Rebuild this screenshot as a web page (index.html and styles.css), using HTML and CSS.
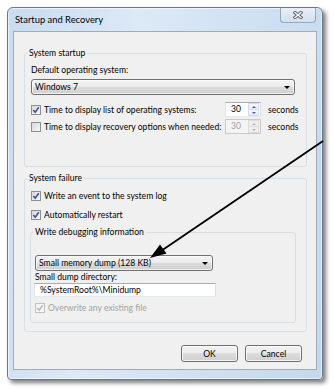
FILE: index.html
```html
<!DOCTYPE html>
<html lang="en">
<head>
    <meta charset="UTF-8">
    <title>Startup and Recovery</title>
    <link rel="stylesheet" href="styles.css">
</head>
<body>
    <div class="window">
        <div class="titlebar">
            <span class="title">Startup and Recovery</span>
            <span class="close">
                <svg width="10" height="8" viewBox="0 0 10 8">
                    <path d="M2 1.5 L8 6.5 M8 1.5 L2 6.5" stroke="#5c636c" stroke-width="3.2" stroke-linecap="square"/>
                    <path d="M2 1.5 L8 6.5 M8 1.5 L2 6.5" stroke="#fff" stroke-width="1.3" stroke-linecap="square"/>
                </svg>
            </span>
        </div>

        <div class="client">
            <fieldset class="group startup">
                <legend>System startup</legend>
                <div class="inner">
                    <div class="label">Default operating system:</div>
                    <div class="combo wide"><span>Windows 7</span><i class="caret"></i></div>
                    <div class="row first">
                        <label class="check wide-label"><span class="box"><svg width="8" height="8" viewBox="0 0 8 8"><path d="M1.3 4 L3.2 6.2 L6.8 1.2" fill="none" stroke="#3b5398" stroke-width="1.6"/></svg></span>Time to display list of operating systems:</label>
                        <span class="spin"><span class="num">30</span><span class="arrows"><b class="up"></b><b class="down"></b></span></span>
                        <span class="unit">seconds</span>
                    </div>
                    <div class="row">
                        <label class="check wide-label"><span class="box"></span>Time to display recovery options when needed:</label>
                        <span class="spin disabled"><span class="num">30</span><span class="arrows"><b class="up"></b><b class="down"></b></span></span>
                        <span class="unit">seconds</span>
                    </div>
                </div>
            </fieldset>

            <fieldset class="group failure">
                <legend>System failure</legend>
                <div class="inner">
                    <label class="check line"><span class="box"><svg width="8" height="8" viewBox="0 0 8 8"><path d="M1.3 4 L3.2 6.2 L6.8 1.2" fill="none" stroke="#3b5398" stroke-width="1.6"/></svg></span>Write an event to the system log</label>
                    <label class="check line second"><span class="box"><svg width="8" height="8" viewBox="0 0 8 8"><path d="M1.3 4 L3.2 6.2 L6.8 1.2" fill="none" stroke="#3b5398" stroke-width="1.6"/></svg></span>Automatically restart</label>

                    <fieldset class="group debug">
                        <legend>Write debugging information</legend>
                        <div class="inner">
                            <div class="combo narrow"><span>Small memory dump (128 KB)</span><i class="caret"></i></div>
                            <div class="label">Small dump directory:</div>
                            <div class="textbox">%SystemRoot%\Minidump</div>
                            <label class="check line disabled overwrite"><span class="box"><svg width="8" height="8" viewBox="0 0 8 8"><path d="M1.3 4 L3.2 6.2 L6.8 1.2" fill="none" stroke="#b4b4b4" stroke-width="1.4"/></svg></span>Overwrite any existing file</label>
                        </div>
                    </fieldset>
                </div>
            </fieldset>

            <div class="buttons">
                <button>OK</button>
                <button>Cancel</button>
            </div>
        </div>
    </div>

    <svg class="pointer" width="334" height="389" viewBox="0 0 334 389">
        <line x1="323" y1="141" x2="161" y2="251" stroke="#000" stroke-width="1.8"/>
        <polygon points="150,258 166.5,253.5 160,244.5" fill="#000"/>
    </svg>
</body>
</html>
```

FILE: styles.css
```css
body { margin: 0; padding: 7px 0 0 7px; height: 389px; box-sizing: border-box; overflow: hidden; position: relative; background: #fff; color: #000; font: 8.6px/12px Lato, "Liberation Sans", sans-serif; }

.window { width: 316px; height: 373px; box-sizing: border-box; border: 1px solid #6e7884; border-radius: 6px 6px 4px 4px; padding: 0 5px 9px; display: flex; flex-direction: column; background: linear-gradient(100deg, #c9dbee 0%, #dce9f7 35%, #d0e1f2 65%, #c4d8ec 100%); box-shadow: 3px 3px 4px rgba(0, 0, 0, 0.5), inset 0 0 0 1px rgba(255, 255, 255, 0.55); }

.titlebar { height: 23px; display: flex; align-items: flex-start; }
.title { padding: 6px 0 0 2px; font-size: 9.4px; }
.close { margin: 0 1px 0 auto; width: 36px; height: 15px; box-sizing: border-box; border: 1px solid rgba(70, 85, 105, 0.45); border-top: 0; border-radius: 0 0 4px 4px; background: linear-gradient(#e8eff8, #d2e0ef); display: flex; align-items: center; justify-content: center; }

.client { flex: 1; background: #f0f0f0; border: 1px solid #9fadbb; display: flex; flex-direction: column; }

.group { margin: 0; padding: 0; min-inline-size: 0; border: 1px solid #d5dfe5; border-radius: 3px; }
.group legend { margin-left: 2px; padding: 0 2px; line-height: 12px; }
.startup { margin: 15px 9px 0 10px; }
.startup > .inner { padding: 5px 0 32px 6px; }
.failure { margin: 5px 9px 0 10px; }
.failure > .inner { padding: 6px 0 8px 6px; }
.debug { margin: 5px 10px 0 -1px; }
.debug > .inner { padding: 17px 0 8px 4px; }

.combo { height: 16px; box-sizing: border-box; border: 1px solid #707070; border-radius: 3px; display: flex; align-items: center; padding: 0 4px 0 3px; background: linear-gradient(#f3f3f3 0%, #ebebeb 50%, #dddddd 50%, #cfcfcf 100%); box-shadow: inset 0 0 0 1px rgba(255, 255, 255, 0.7); }
.combo.wide { width: 264px; margin-top: 3px; }
.combo.narrow { width: 178px; }
.caret { margin-left: auto; width: 0; height: 0; border-left: 3px solid transparent; border-right: 3px solid transparent; border-top: 3px solid #000; }

.row { display: flex; align-items: center; height: 15px; margin-top: 2px; }
.row.first { margin-top: 7px; }
.wide-label { flex: 0 0 194px; }
.unit { margin-left: 7px; }

.check { display: flex; align-items: center; white-space: nowrap; }
.check.line { height: 12px; }
.check.second { margin-top: 7px; }
.check.overwrite { margin-top: 5px; }
.check.disabled { color: #a3a3a3; }
.box { flex: 0 0 10px; width: 10px; height: 10px; box-sizing: border-box; margin-right: 3px; border: 1px solid #8e8f8f; background: linear-gradient(135deg, #d6d9de, #f7f7f7); display: flex; align-items: center; justify-content: center; }
.check.disabled .box { border-color: #c2c2c2; background: #f4f4f4; }

.spin { flex: 0 0 36px; height: 15px; box-sizing: border-box; display: flex; border: 1px solid; border-color: #abadb3 #dbdfe6 #e3e9ef #e2e3ea; background: #fff; }
.spin .num { flex: 1; padding-left: 5px; line-height: 13px; }
.arrows { width: 11px; margin: 0 1px 0 0; display: flex; flex-direction: column; }
.arrows b { flex: 1; display: flex; align-items: center; justify-content: center; border: 1px solid #d6dde6; background: linear-gradient(#f6f8fb, #e4eaf2); }
.arrows b + b { border-top: 0; }
.arrows .up::after { content: ""; border-left: 2.5px solid transparent; border-right: 2.5px solid transparent; border-bottom: 2px solid #4a5f8c; }
.arrows .down::after { content: ""; border-left: 2.5px solid transparent; border-right: 2.5px solid transparent; border-top: 2px solid #4a5f8c; }
.spin.disabled { background: #f4f4f4; border-color: #c9c9c9; color: #a3a3a3; }
.spin.disabled .arrows b { border-color: #dcdcdc; background: #efefef; }
.spin.disabled .up::after { border-bottom-color: #b5b5b5; }
.spin.disabled .down::after { border-top-color: #b5b5b5; }

.label { line-height: 12px; }
.textbox { width: 182px; height: 14px; box-sizing: border-box; margin-left: -1px; padding-left: 5px; line-height: 12px; background: #fff; border: 1px solid; border-color: #abadb3 #dbdfe6 #e3e9ef #e2e3ea; }

.buttons { display: flex; justify-content: flex-end; gap: 7px; margin: 13px 14px 0 0; }
button { width: 57px; height: 17px; padding: 0; font: inherit; color: #000; border: 1px solid #707070; border-radius: 3px; background: linear-gradient(#f3f3f3 0%, #ebebeb 50%, #dddddd 50%, #cfcfcf 100%); box-shadow: inset 0 0 0 1px rgba(255, 255, 255, 0.75); }

.pointer { position: absolute; top: 0; left: 0; pointer-events: none; }
```
